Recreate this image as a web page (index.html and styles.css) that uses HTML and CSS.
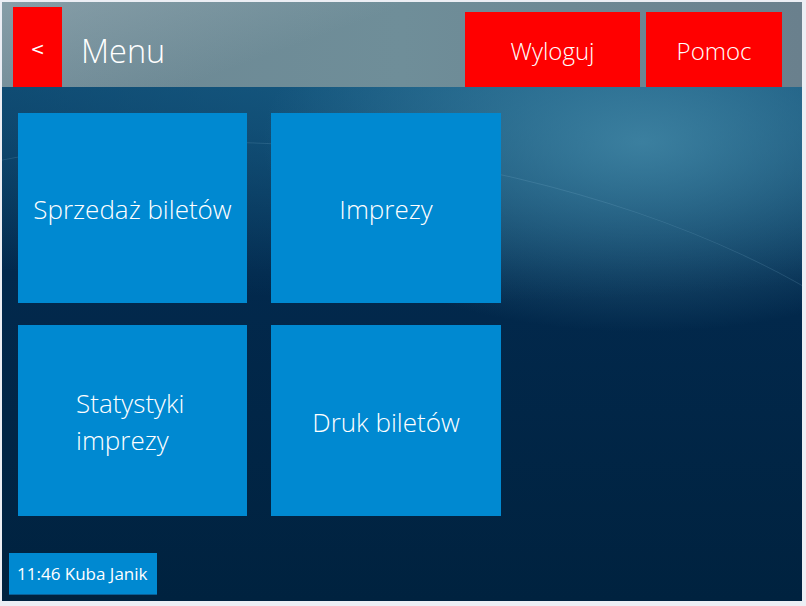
FILE: index.html
```html
<!DOCTYPE html>
<html>
<head>
  <meta charset="UTF-8">
  <link rel="stylesheet" href="styles.css">
</head>
<body>
  <div class="window">
    <div class="header">
      <button class="back-btn">&lt;</button>
      <div class="title">Menu</div>
      <div class="header-actions">
        <button class="action-btn logout">Wyloguj</button>
        <button class="action-btn help">Pomoc</button>
      </div>
    </div>

    <div class="tiles">
      <div class="tile">Sprzedaż biletów</div>
      <div class="tile">Imprezy</div>
      <div class="tile"><span class="tile-wrap">Statystyki imprezy</span></div>
      <div class="tile">Druk biletów</div>
    </div>

    <div class="footer">
      <div class="user-badge">11:46 Kuba Janik</div>
    </div>
  </div>
</body>
</html>
```

FILE: styles.css
```css
* {
  margin: 0;
  padding: 0;
  box-sizing: border-box;
}

body {
  width: 806px;
  height: 606px;
  background: #eceef4;
  font-family: 'Open Sans', 'Noto Sans', sans-serif;
  font-weight: 300;
  color: #ffffff;
  overflow: hidden;
}

.window {
  position: relative;
  margin: 2px 4px 0 2px;
  width: 800px;
  height: 599px;
  display: flex;
  flex-direction: column;
  background:
    radial-gradient(ellipse 380px 190px at 640px 140px, rgba(70, 140, 170, 0.8), rgba(70, 140, 170, 0) 100%),
    radial-gradient(ellipse 900px 240px at 450px 60px, rgba(25, 95, 135, 0.85), rgba(25, 95, 135, 0) 100%),
    linear-gradient(180deg, #0c4870 0%, #02294d 45%, #00223f 100%);
  overflow: hidden;
}

/* Light streak across the wallpaper */
.window::before {
  content: "";
  position: absolute;
  left: -300px;
  top: 150px;
  width: 1300px;
  height: 600px;
  border-top: 1px solid rgba(140, 190, 215, 0.18);
  border-radius: 50%;
  transform: rotate(8deg);
  pointer-events: none;
}

.header {
  position: relative;
  z-index: 1;
  height: 85px;
  display: flex;
  align-items: flex-end;
  background:
    linear-gradient(160deg, rgba(160, 180, 188, 0.5) 0%, rgba(160, 180, 188, 0) 40%),
    linear-gradient(90deg, #6c8793 0%, #6f8e99 50%, #6a808d 100%);
}

.back-btn {
  width: 49px;
  height: 80px;
  margin-left: 11px;
  background: #ff0000;
  border: none;
  color: #ffffff;
  font-family: 'DejaVu Sans', sans-serif;
  font-weight: normal;
  font-size: 17px;
  padding-top: 4px;
}

.title {
  align-self: center;
  margin-left: 19px;
  margin-top: 12px;
  font-size: 32.5px;
  font-weight: 300;
}

.header-actions {
  margin-left: auto;
  margin-right: 20px;
  display: flex;
  gap: 6px;
}

.action-btn {
  height: 75px;
  background: #ff0000;
  border: none;
  color: #ffffff;
  font-family: 'Open Sans', sans-serif;
  font-weight: 300;
  font-size: 24px;
  padding-top: 2px;
}

.logout {
  width: 175px;
}

.help {
  width: 136px;
}

.tiles {
  position: relative;
  z-index: 1;
  display: grid;
  grid-template-columns: 229px 230px;
  grid-template-rows: 190px 191px;
  column-gap: 24px;
  row-gap: 22px;
  margin: 26px 0 0 16px;
}

.tile {
  background: #0089d1;
  display: flex;
  align-items: center;
  justify-content: center;
  text-align: center;
  font-size: 26px;
  font-weight: 300;
  padding-top: 2px;
}

.tile-wrap {
  display: block;
  width: 135px;
  text-align: left;
  line-height: 37px;
  margin-left: 22px;
}

.footer {
  position: relative;
  z-index: 1;
  margin-top: auto;
  padding: 0 0 6px 7px;
}

.user-badge {
  display: inline-flex;
  align-items: center;
  width: 148px;
  height: 42px;
  padding-left: 8px;
  background: #0089d1;
  border-bottom: 1px solid #0a5f97;
  font-size: 17px;
  font-weight: 400;
  white-space: nowrap;
}
```
